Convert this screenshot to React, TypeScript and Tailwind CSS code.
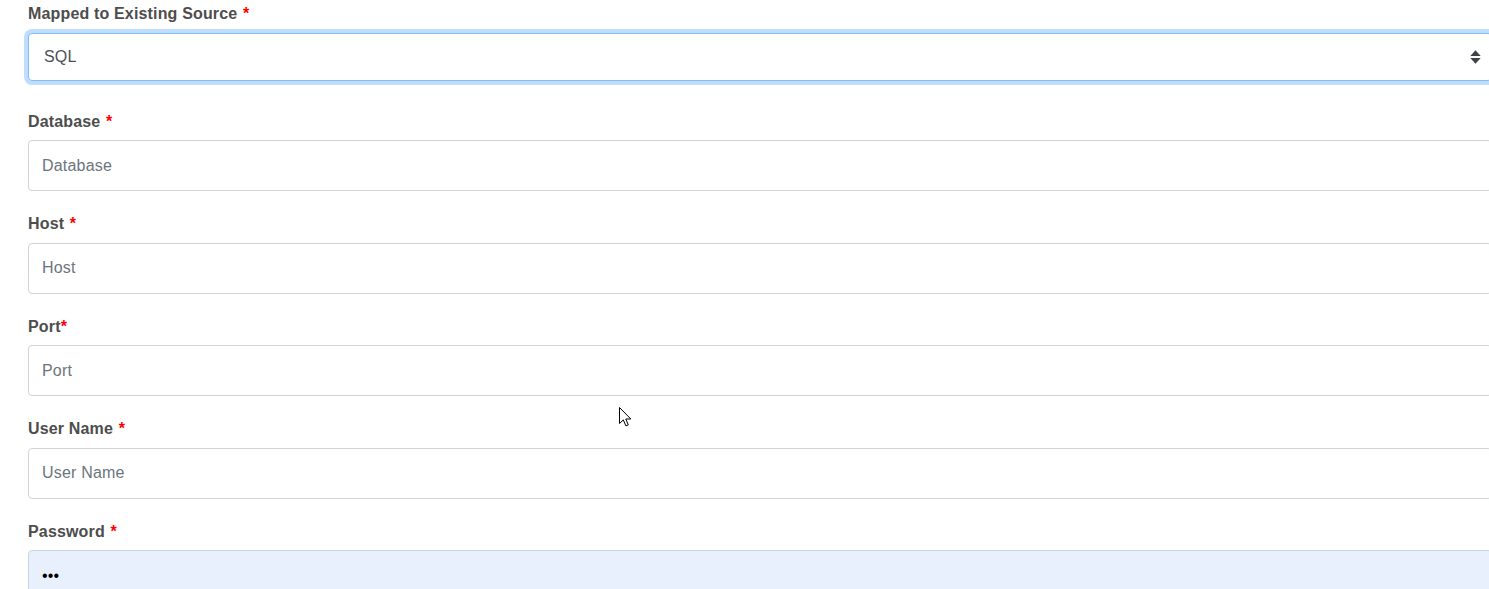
import React from "react";

interface Field {
  label: string;
  placeholder: string;
  tight?: boolean;
  type?: string;
  value?: string;
}

const FIELDS: Field[] = [
  { label: "Database", placeholder: "Database" },
  { label: "Host", placeholder: "Host" },
  { label: "Port", placeholder: "Port", tight: true },
  { label: "User Name", placeholder: "User Name" },
  { label: "Password", placeholder: "Password", type: "password", value: "abc" },
];

function Label({ text, tight }: { text: string; tight?: boolean }) {
  return (
    <label className="block h-6 leading-6 mb-[6.5px] text-[16px] font-bold tracking-[0.16px] text-[#4d4d4d]">
      {text}
      {!tight && " "}
      <span className={`text-[#ff0000] ${tight ? "" : "ml-[1px]"}`}>*</span>
    </label>
  );
}

function SortArrows() {
  return (
    <svg
      width="11"
      height="14"
      viewBox="0 0 11 14"
      className="pointer-events-none absolute left-[1442px] top-[17px]"
    >
      <path d="M5.5 0.3 L10.7 6 H0.3 Z" fill="#3d4348" />
      <path d="M0.3 7.9 H10.7 L5.5 13.7 Z" fill="#3d4348" />
    </svg>
  );
}

function Cursor() {
  return (
    <svg
      width="13"
      height="20"
      viewBox="0 0 13 20"
      className="pointer-events-none absolute left-[619px] top-[407px]"
    >
      <path
        d="M0.5 0.5 V16.5 L4.3 12.9 L6.9 18.9 L9.3 17.9 L6.8 12 H11.8 Z"
        fill="#ffffff"
        stroke="#000000"
        strokeWidth="1"
      />
    </svg>
  );
}

export default function App() {
  return (
    <div className="relative w-full h-[589px] overflow-hidden bg-white font-['Liberation_Sans',Arial,sans-serif]">
      <div className="pl-[28px] pt-[2px] w-[1492px]">
        <div className="mb-[29px]">
          <Label text="Mapped to Existing Source" />
          <div className="relative">
            <select
              defaultValue="sql"
              className="block w-full h-[48px] appearance-none rounded-[4px] border border-[#80bdff] bg-white pl-[15px] text-[16px] tracking-[0.2px] text-[#495057] shadow-[0_0_0_4px_rgba(0,123,255,0.25)] outline-none"
            >
              <option value="sql">SQL</option>
              <option value="oracle">Oracle</option>
            </select>
            <SortArrows />
          </div>
        </div>

        {FIELDS.map((f) => (
          <div key={f.label} className="mb-[21px]">
            <Label text={f.label} tight={f.tight} />
            <input
              type={f.type ?? "text"}
              placeholder={f.placeholder}
              defaultValue={f.value}
              readOnly={!!f.value}
              className={`block w-full h-[51px] rounded-[4px] border border-[#ced4da] px-[13px] text-[16px] tracking-[0.2px] text-black placeholder:text-[#6c757d] outline-none ${
                f.value ? "bg-[#e8f0fe]" : "bg-white"
              }`}
            />
          </div>
        ))}
      </div>
      <Cursor />
    </div>
  );
}
